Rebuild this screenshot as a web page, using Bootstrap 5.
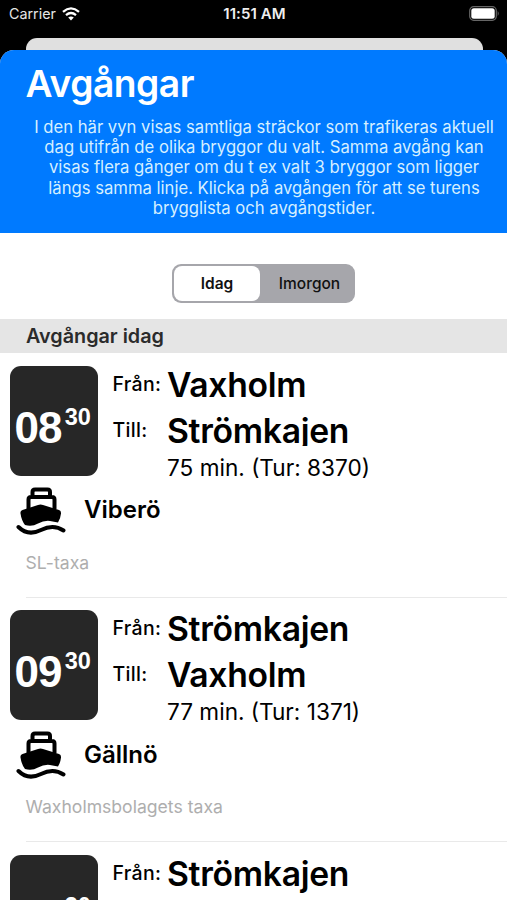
<!DOCTYPE html>
<html lang="sv">
<head>
<meta charset="utf-8">
<meta name="viewport" content="width=device-width, initial-scale=1">
<title>Avgångar</title>
<link href="https://cdn.jsdelivr.net/npm/bootstrap@5.3.0/dist/css/bootstrap.min.css" rel="stylesheet">
<style>
body{font-family:Inter,"Noto Sans",sans-serif;background:#000;color:#000}
.screen{width:507px;height:900px}
.statusbar{height:38px;color:#e6e6e6;padding:0 7px 11px 9px;font-size:14.3px}
.statusbar .clock{font-weight:600;font-size:15px;letter-spacing:.1px;color:#eee;padding-top:2px}
.statusbar .wifi{margin-left:6px}
.back-sheet{height:12px;margin:0 24px 0 26px;background:#e0e0e0;border-radius:11px 11px 0 0}
.sheet{border-radius:14px 14px 0 0}
.hero{height:183px;background:#007aff;padding:13px 8px 0 25.5px}
.hero h1{font-size:37.2px;line-height:42px;font-weight:600;letter-spacing:-.5px;margin:0}
.hero p{font-size:16.65px;line-height:20.4px;color:#d5efff;margin:11.500px 0 0 3.5px;white-space:nowrap}
.segments{width:183px;height:39px;margin:31px 0 16px 172px;padding:2px;background:#a6a6ab;border-radius:9px;font-size:15.5px;font-weight:500}
.segments .seg{border-radius:8px;color:#111}
.segments .seg.on{background:#fff;width:86px;font-weight:600}
.segments .seg.off{padding-left:6px}
.section-head{height:34px;background:#e5e5e5;padding:2px 0 0 26px;font-size:19.8px;font-weight:600;color:#2b2b2b}
.departure{height:244.33px;padding:13px 0 0 9.5px}
.tile{width:88px;height:110px;background:#272727;border-radius:11px;color:#fff;font-family:"Liberation Sans",Arial,sans-serif;font-weight:700;padding:38px 0 0 5px}
.tile .hh{font-size:44px;line-height:47px;letter-spacing:-.9px}
.tile .mm{font-size:23.5px;line-height:24px;margin:1px 0 0 3px}
.legs{padding-left:15px}
.leg{height:46px}
.leg.to{height:43px}
.leg-label{width:54.5px;font-size:19.5px;font-weight:500;letter-spacing:.3px;line-height:36px}
.place{font-size:33.7px;line-height:38px;font-weight:600;letter-spacing:-.3px}
.clip{height:34px}
.meta{font-size:22.6px;line-height:26px;margin-left:54.5px}
.boatrow{margin:2.700px 0 0 6.500px;height:54px}
.vessel{font-size:24px;line-height:30px;font-weight:600;margin:0 0 1px 18px}
.fare{font-size:17.6px;line-height:22px;color:#aeaeae;margin:14px 0 0 16px}
.rule{height:1px;background:#e9e9e9;margin:23px 0 0 16.5px}
</style>
<script src="https://cdn.jsdelivr.net/npm/bootstrap@5.3.0/dist/js/bootstrap.bundle.min.js"></script>
</head>
<body>
<svg class="d-none">
<symbol id="boat" viewBox="0 0 50 48">
<path d="M16.500 10V5Q16.500 2.500 19 2.500h12.500Q34 2.500 34 5v5M12.500 22v-9.500q0-2.500 2.500-2.500h21q2.500 0 2.500 2.500V22" fill="none" stroke="#000" stroke-width="4"/>
<path d="M6.500 23Q4 24 4.500 26.500q1 7 4.500 11.500 7 2 13-1.500 6-3.200 12-2.500l8 1.500q2.500-4 3-9 .3-2.700-2-3.500L27 18q-2.500-.8-5 0Z"/>
<path d="M2.500 40C9 46.500 17 47 25 43S40 38.500 47.500 43.500" fill="none" stroke="#000" stroke-width="4" stroke-linecap="round"/>
</symbol>
</svg>
<div class="screen overflow-hidden">
<header class="statusbar d-flex align-items-center">
<div class="d-flex align-items-center flex-fill w-50"><span>Carrier</span>
<svg class="wifi" width="18" height="14" viewBox="0 0 18 14" fill="none" stroke="#fff" stroke-width="2.300"><path d="M1 4.800Q9-2 17 4.800M4 8.100q5-4.200 10 0"/><path d="M9 13.500 6.200 10.600q2.800-2.400 5.600 0Z" fill="#fff" stroke="none"/></svg></div>
<div class="clock text-nowrap">11:51 AM</div>
<div class="flex-fill w-50 text-end lh-1"><svg width="31" height="15" viewBox="0 0 31 15"><rect x=".7" y=".7" width="26.600" height="13.600" rx="4" fill="none" stroke="#666" stroke-width="1.200"/><rect x="2.300" y="2.300" width="23.400" height="10.400" rx="2.500" fill="#fff"/><path d="M28.700 5q2 2.500 0 5Z" fill="#666"/></svg></div>
</header>
<div class="back-sheet"></div>
<main class="sheet bg-white overflow-hidden">
<section class="hero text-white">
<h1>Avgångar</h1>
<p class="text-center">I den här vyn visas samtliga sträckor som trafikeras aktuell<br>dag utifrån de olika bryggor du valt. Samma avgång kan<br>visas flera gånger om du t ex valt 3 bryggor som ligger<br>längs samma linje. Klicka på avgången för att se turens<br>brygglista och avgångstider.</p>
</section>
<div class="segments d-flex" role="tablist">
<div class="seg on d-flex align-items-center justify-content-center">Idag</div>
<div class="seg off flex-fill d-flex align-items-center justify-content-center">Imorgon</div>
</div>
<div class="section-head d-flex align-items-center">Avgångar idag</div>
<article class="departure">
<div class="d-flex">
<div class="tile d-flex align-items-start flex-shrink-0"><span class="hh">08</span><span class="mm">30</span></div>
<div class="legs">
<div class="d-flex align-items-start leg"><span class="leg-label">Från:</span><span class="place">Vaxholm</span></div>
<div class="d-flex align-items-start leg to"><span class="leg-label">Till:</span><span class="place clip overflow-hidden">Strömkajen</span></div>
<div class="meta">75 min. (Tur: 8370)</div>
</div>
</div>
<div class="d-flex align-items-center boatrow"><svg width="50" height="48"><use href="#boat"/></svg><span class="vessel">Viberö</span></div>
<div class="fare">SL-taxa</div>
<div class="rule"></div>
</article>
<article class="departure">
<div class="d-flex">
<div class="tile d-flex align-items-start flex-shrink-0"><span class="hh">09</span><span class="mm">30</span></div>
<div class="legs">
<div class="d-flex align-items-start leg"><span class="leg-label">Från:</span><span class="place">Strömkajen</span></div>
<div class="d-flex align-items-start leg to"><span class="leg-label">Till:</span><span class="place">Vaxholm</span></div>
<div class="meta">77 min. (Tur: 1371)</div>
</div>
</div>
<div class="d-flex align-items-center boatrow"><svg width="50" height="48"><use href="#boat"/></svg><span class="vessel">Gällnö</span></div>
<div class="fare">Waxholmsbolagets taxa</div>
<div class="rule"></div>
</article>
<article class="departure">
<div class="d-flex">
<div class="tile d-flex align-items-start flex-shrink-0"><span class="hh">09</span><span class="mm">30</span></div>
<div class="legs">
<div class="d-flex align-items-start leg"><span class="leg-label">Från:</span><span class="place">Strömkajen</span></div>
</div>
</div>
</article>
</main>
</div>
</body>
</html>
